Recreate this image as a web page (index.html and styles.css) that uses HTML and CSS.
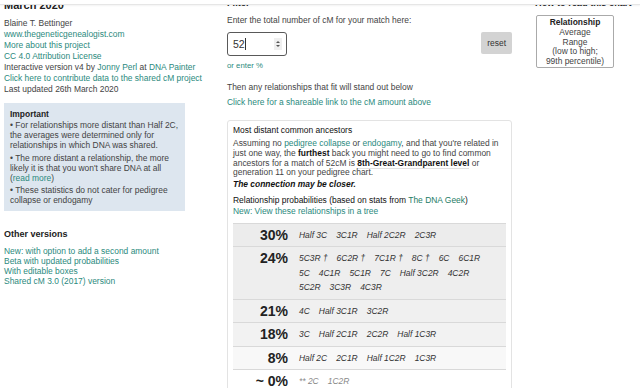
FILE: index.html
```html
<!DOCTYPE html>
<html lang="en">
<head>
<meta charset="utf-8">
<title>Shared cM Project</title>
<link rel="stylesheet" href="styles.css">
</head>
<body>
<div class="topbar"></div>
<div class="page">
  <aside class="left">
    <h2 class="title">March 2020</h2>
    <div class="meta">
      <div>Blaine T. Bettinger</div>
      <div><a href="#">www.thegeneticgenealogist.com</a></div>
      <div><a href="#">More about this project</a></div>
      <div><a href="#">CC 4.0 Attribution License</a></div>
      <div>Interactive version v4 by <a href="#">Jonny Perl</a> at <a href="#">DNA Painter</a></div>
      <div><a href="#">Click here to contribute data to the shared cM project</a></div>
      <div>Last updated 26th March 2020</div>
    </div>
    <div class="important">
      <div class="imp-title">Important</div>
      <p>• For relationships more distant than Half 2C, the averages were determined only for relationships in which DNA was shared.</p>
      <p>• The more distant a relationship, the more likely it is that you won't share DNA at all (<a href="#">read more</a>)</p>
      <p>• These statistics do not cater for pedigree collapse or endogamy</p>
    </div>
    <h3 class="sub">Other versions</h3>
    <div class="versions">
      <a href="#">New: with option to add a second amount</a>
      <a href="#">Beta with updated probabilities</a>
      <a href="#">With editable boxes</a>
      <a href="#">Shared cM 3.0 (2017) version</a>
    </div>
  </aside>

  <main class="mid">
    <h3 class="hd">Filter</h3>
    <p class="enter">Enter the total number of cM for your match here:</p>
    <div class="inrow">
      <div class="numbox">
        <span class="val">52</span><span class="caret"></span>
        <span class="spin"><svg width="8" height="12" viewBox="0 0 8 12"><path d="M2 5 L4 3 L6 5 Z" fill="#555"/><path d="M2 7 L4 9 L6 7 Z" fill="#555"/></svg></span>
      </div>
      <button class="reset">reset</button>
    </div>
    <a class="pct" href="#">or enter %</a>
    <p class="then">Then any relationships that fit will stand out below</p>
    <a class="share" href="#">Click here for a shareable link to the cM amount above</a>

    <section class="card">
      <div class="card-title">Most distant common ancestors</div>
      <p class="mdca">Assuming no <a href="#">pedigree collapse</a> or <a href="#">endogamy</a>, and that you're related in just one way, the <b>furthest</b> back you might need to go to find common ancestors for a match of 52cM is <b class="lvl">8th-Great-Grandparent level</b> or generation 11 on your pedigree chart.</p>
      <p class="closer">The connection may be closer.</p>
      <div class="card-title probs">Relationship probabilities (based on stats from <a class="geek" href="#">The DNA Geek</a>)</div>
      <a class="tree" href="#">New: View these relationships in a tree</a>

      <div class="table">
        <div class="row r30">
          <div class="p">30%</div>
          <div class="rels"><span>Half 3C</span><span>3C1R</span><span>Half 2C2R</span><span>2C3R</span></div>
        </div>
        <div class="row r24">
          <div class="p">24%</div>
          <div class="rels"><span>5C3R †</span><span>6C2R †</span><span>7C1R †</span><span>8C †</span><span>6C</span><span>6C1R</span><span>5C</span><span>4C1R</span><span>5C1R</span><span>7C</span><span>Half 3C2R</span><span>4C2R</span><span>5C2R</span><span>3C3R</span><span>4C3R</span></div>
        </div>
        <div class="row r21">
          <div class="p">21%</div>
          <div class="rels"><span>4C</span><span>Half 3C1R</span><span>3C2R</span></div>
        </div>
        <div class="row r18">
          <div class="p">18%</div>
          <div class="rels"><span>3C</span><span>Half 2C1R</span><span>2C2R</span><span>Half 1C3R</span></div>
        </div>
        <div class="row r8">
          <div class="p">8%</div>
          <div class="rels"><span>Half 2C</span><span>2C1R</span><span>Half 1C2R</span><span>1C3R</span></div>
        </div>
        <div class="row r0">
          <div class="p">~ 0%</div>
          <div class="rels faint"><span>** 2C</span><span>1C2R</span></div>
        </div>
      </div>
    </section>
  </main>

  <aside class="right">
    <h3 class="hd">How to read this chart</h3>
    <div class="legend">
      <div class="lg-title">Relationship</div>
      <div>Average</div>
      <div>Range</div>
      <div>(low to high;</div>
      <div>99th percentile)</div>
    </div>
  </aside>
</div>
</body>
</html>
```

FILE: styles.css
```css
html, body {
  margin: 0;
  padding: 0;
  overflow: hidden;
  background: #fff;
}

body {
  font-family: "Liberation Sans", Arial, sans-serif;
  font-size: 8.45px;
  color: #444;
}

a {
  color: #2b8a7e;
  text-decoration: none;
}

p, h2, h3 {
  margin: 0;
}

.topbar {
  position: fixed;
  top: 0;
  left: 0;
  right: 0;
  height: 4px;
  background: #fff;
  border-bottom: 1px solid #e6e6e6;
  box-shadow: 0 1px 2px rgba(0, 0, 0, 0.05);
  z-index: 10;
}

.page {
  display: flex;
  align-items: flex-start;
  padding-left: 4px;
}

/* left column */
.left {
  flex: none;
  width: 223px;
}

.title {
  margin-top: -1px;
  font-size: 11px;
  line-height: 13px;
  font-weight: bold;
  color: #222;
}

.meta {
  margin-top: 6px;
  line-height: 11px;
}

.important {
  margin-top: 8px;
  width: 181px;
  box-sizing: border-box;
  padding: 6px 3px 6px 6px;
  background: #dde6ef;
  line-height: 10px;
}

.imp-title {
  font-weight: bold;
  color: #222;
  margin-bottom: 1px;
}

.important p {
  margin-bottom: 2.5px;
}

.important p:last-child {
  margin-bottom: 0;
}

.sub {
  margin-top: 18px;
  font-size: 9px;
  line-height: 11px;
  font-weight: bold;
  color: #222;
}

.versions {
  margin-top: 6px;
  display: flex;
  flex-direction: column;
  line-height: 10px;
}

/* middle column */
.mid {
  flex: none;
  width: 285px;
}

.hd {
  margin-top: -2px;
  font-size: 9.2px;
  line-height: 11px;
  font-weight: bold;
  color: #222;
}

.enter {
  margin-top: 5.5px;
  line-height: 11px;
}

.inrow {
  margin-top: 6px;
  display: flex;
  justify-content: space-between;
  align-items: flex-start;
}

.numbox {
  width: 60px;
  height: 24px;
  box-sizing: border-box;
  border: 1px solid #595959;
  border-radius: 3px;
  display: flex;
  align-items: center;
  padding-left: 5px;
  padding-right: 4px;
}

.val {
  font-size: 10.5px;
  color: #333;
}

.caret {
  width: 1px;
  height: 12px;
  background: #333;
  margin-left: 0.5px;
}

.spin {
  margin-left: auto;
  width: 8px;
  height: 12px;
  background: #efefef;
  display: flex;
}

.reset {
  height: 22px;
  margin: 0.5px 0 0;
  padding: 0 6px;
  border: none;
  border-radius: 2px;
  background: #d3d3d3;
  font-family: inherit;
  font-size: 8.45px;
  color: #333;
}

.pct {
  display: block;
  margin-top: 5px;
  font-size: 7.8px;
  line-height: 10px;
}

.then {
  margin-top: 11px;
  line-height: 11px;
}

.share {
  display: block;
  margin-top: 4px;
  line-height: 11px;
}

.card {
  margin-top: 12.5px;
  border: 1px solid #e3e3e3;
  border-radius: 3px;
  padding: 5px 5px 0 5px;
  line-height: 9.75px;
}

.card-title {
  color: #111;
}

.mdca {
  margin-top: 3.25px;
}

.mdca b {
  color: #111;
}

.lvl {
  border-bottom: 1px solid #e2e2e2;
}

.closer {
  margin-top: 1.5px;
  font-weight: bold;
  font-style: italic;
  color: #111;
}

.probs {
  margin-top: 7px;
}

.geek {
  color: #1e7c66;
}

.tree {
  display: block;
  margin-top: 1.3px;
}

.table {
  margin-top: 5.5px;
}

.row {
  display: flex;
  align-items: flex-start;
  border-top: 1px solid #d9d9d9;
  padding: 4px 0 4px;
  background: #efefef;
}

.r30 { background: #ececec; }
.r24 { background: #eeeeee; }
.r21 { background: #f0f0f0; }
.r18 { background: #f2f2f2; }
.r8 { background: #f8f8f8; }
.r0 { background: #fff; }

.p {
  flex: none;
  width: 55px;
  text-align: right;
  font-size: 14px;
  line-height: 14.5px;
  font-weight: bold;
  color: #222;
}

.rels {
  margin-left: 11px;
  width: 200px;
  font-style: italic;
  color: #333;
  line-height: 14.5px;
}

.rels span {
  display: inline-block;
  margin-right: 9px;
  white-space: nowrap;
}

.rels.faint {
  color: #888;
}

/* right column */
.right {
  flex: none;
  margin-left: 23px;
}

.legend {
  margin-top: 6px;
  margin-left: 1px;
  width: 78px;
  box-sizing: border-box;
  border: 1px solid #aaa;
  border-radius: 2px;
  padding: 2px 2px 0;
  text-align: center;
  line-height: 9.75px;
  color: #444;
}

.lg-title {
  font-weight: bold;
  color: #222;
}
```
